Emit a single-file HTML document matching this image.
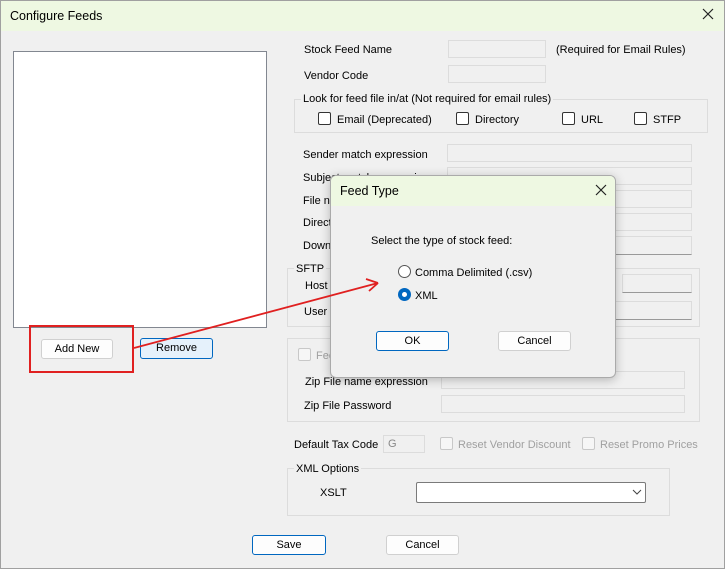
<!DOCTYPE html><html><head><style>
body{margin:0;width:725px;height:569px;overflow:hidden;background:#f0f0f0;font-family:"Liberation Sans",sans-serif;font-size:11px;line-height:21px;color:#000;position:relative}
.a{position:absolute;white-space:nowrap}
.in{position:absolute;background:#f0f0f0;border:1px solid #dcdcdc;box-sizing:border-box}
.btn{position:absolute;background:#fdfdfd;border:1px solid #d0d0d0;border-radius:3px;box-sizing:border-box;text-align:center;line-height:18px}
.blue{border:1px solid #0067c0;background:#fdfdfd}
.grp{position:absolute;border:1px solid #dcdcdc;box-sizing:border-box}
.gl{position:absolute;background:#f0f0f0;padding:0 2px;top:-8px;left:6px;line-height:15px}
.cb{position:absolute;width:11px;height:11px;border:1px solid #333;border-radius:2px;background:#fff}
.g{color:#a0a0a0}
.cbg{border-color:#c8c8c8;background:#f6f6f6}
</style></head><body>
<div class="a" style="left:0;top:0;width:723px;height:567px;border:1px solid #a0a0a0"></div>
<div class="a" style="top:1px;left:1px;width:723px;height:30px;background:#eef8e2"></div>
<div class="a" style="left:10px;top:6px;font-size:12.5px">Configure Feeds</div>
<svg class="a" style="left:702px;top:8px" width="12" height="12"><path d="M1 1L11 11M11 1L1 11" stroke="#222" stroke-width="1.2"/></svg>
<div class="a" style="left:13px;top:51px;width:254px;height:277px;background:#fff;border:1px solid #828790;box-sizing:border-box"></div>
<div class="btn" style="left:41px;top:339px;width:72px;height:20px">Add New</div>
<div class="a" style="left:29px;top:325px;width:105px;height:48px;border:2px solid #e02020;box-sizing:border-box"></div>
<div class="btn blue" style="left:140px;top:338px;width:73px;height:21px;background:#e5f1fb">Remove</div>

<div class="a" style="left:304px;top:40px">Stock Feed Name</div>
<div class="in" style="left:448px;top:40px;width:98px;height:18px"></div>
<div class="a" style="left:556px;top:40px">(Required for Email Rules)</div>
<div class="a" style="left:304px;top:66px">Vendor Code</div>
<div class="in" style="left:448px;top:65px;width:98px;height:18px"></div>
<div class="grp" style="left:294px;top:99px;width:414px;height:34px"><div class="gl" style="left:6px">Look for feed file in/at (Not required for email rules)</div></div>
<div class="cb" style="left:318px;top:112px"></div><div class="a" style="left:337px;top:110px">Email (Deprecated)</div>
<div class="cb" style="left:456px;top:112px"></div><div class="a" style="left:475px;top:110px">Directory</div>
<div class="cb" style="left:562px;top:112px"></div><div class="a" style="left:581px;top:110px">URL</div>
<div class="cb" style="left:634px;top:112px"></div><div class="a" style="left:653px;top:110px">STFP</div>

<div class="a" style="left:303px;top:145px">Sender match expression</div><div class="in" style="left:447px;top:144px;width:245px;height:18px"></div>
<div class="a" style="left:303px;top:168px">Subject match expression</div><div class="in" style="left:447px;top:167px;width:245px;height:18px"></div>
<div class="a" style="left:303px;top:191px">File name</div><div class="in" style="left:447px;top:190px;width:245px;height:18px"></div>
<div class="a" style="left:303px;top:213px">Directory</div><div class="in" style="left:447px;top:213px;width:245px;height:18px"></div>
<div class="a" style="left:303px;top:236px">Download</div><div class="in" style="left:447px;top:236px;width:245px;height:19px;border-bottom-color:#999"></div>

<div class="grp" style="left:287px;top:268px;width:413px;height:59px"><div class="gl" style="left:6px;top:-7px">SFTP</div></div>
<div class="a" style="left:305px;top:276px">Host</div><div class="in" style="left:622px;top:274px;width:70px;height:19px;border-bottom-color:#999"></div>
<div class="a" style="left:304px;top:302px">User</div><div class="in" style="left:614px;top:301px;width:78px;height:19px;border-bottom-color:#999"></div>

<div class="grp" style="left:287px;top:338px;width:413px;height:84px"></div>
<div class="cb cbg" style="left:298px;top:348px"></div><div class="a g" style="left:316px;top:346px">Feed file is zipped</div>
<div class="a" style="left:305px;top:372px">Zip File name expression</div><div class="in" style="left:441px;top:371px;width:244px;height:18px"></div>
<div class="a" style="left:304px;top:396px">Zip File Password</div><div class="in" style="left:441px;top:395px;width:244px;height:18px"></div>

<div class="a" style="left:294px;top:435px">Default Tax Code</div>
<div class="in" style="left:383px;top:435px;width:42px;height:18px;color:#888;padding-left:4px;line-height:16px">G</div>
<div class="cb cbg" style="left:440px;top:437px"></div><div class="a g" style="left:458px;top:435px">Reset Vendor Discount</div>
<div class="cb cbg" style="left:582px;top:437px"></div><div class="a g" style="left:600px;top:435px">Reset Promo Prices</div>

<div class="grp" style="left:287px;top:468px;width:383px;height:48px"><div class="gl" style="left:6px;top:-7px">XML Options</div></div>
<div class="a" style="left:320px;top:483px">XSLT</div>
<div class="a" style="left:416px;top:482px;width:230px;height:21px;background:#fff;border:1px solid #7a7a7a;box-sizing:border-box;border-radius:2px"></div>
<svg class="a" style="left:632px;top:489px" width="10" height="6"><path d="M1 1L5 5L9 1" stroke="#444" fill="none"/></svg>

<div class="btn blue" style="left:252px;top:535px;width:74px;height:20px">Save</div>
<div class="btn" style="left:386px;top:535px;width:73px;height:20px">Cancel</div>

<div class="a" style="left:330px;top:175px;width:286px;height:203px;background:#f0f0f0;border:1px solid #aaa;border-radius:6px;box-sizing:border-box;box-shadow:0 2px 10px rgba(0,0,0,.25);overflow:hidden">
<div class="a" style="left:0;top:0;width:286px;height:30px;background:#eef8e2"></div>
<div class="a" style="left:9px;top:5px;font-size:12.5px">Feed Type</div>
<svg class="a" style="left:264px;top:8px" width="12" height="12"><path d="M1 1L11 11M11 1L1 11" stroke="#222" stroke-width="1.2"/></svg>
<div class="a" style="left:40px;top:55px">Select the type of stock feed:</div>
<div class="a" style="left:67px;top:89px;width:11px;height:11px;border:1px solid #555;border-radius:50%;background:#fff"></div>
<div class="a" style="left:84px;top:87px">Comma Delimited (.csv)</div>
<div class="a" style="left:67px;top:112px;width:13px;height:13px;border-radius:50%;background:#0067c0"></div>
<div class="a" style="left:71px;top:116px;width:5px;height:5px;border-radius:50%;background:#fff"></div>
<div class="a" style="left:84px;top:110px">XML</div>
<div class="btn blue" style="left:45px;top:155px;width:73px;height:20px">OK</div>
<div class="btn" style="left:167px;top:155px;width:73px;height:20px">Cancel</div>
</div>
<svg class="a" style="left:0;top:0" width="725" height="569"><path d="M134 348L378 283" stroke="#e02020" stroke-width="1.8"/><path d="M378 283L366 279M378 283L369 291" stroke="#e02020" stroke-width="1.8"/></svg>
</body></html>
